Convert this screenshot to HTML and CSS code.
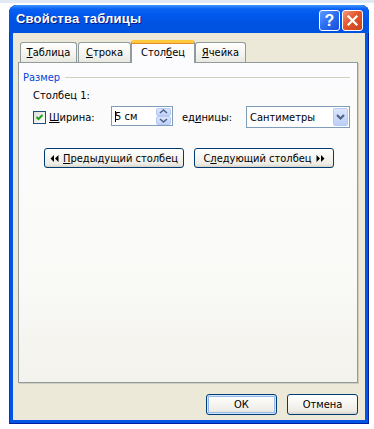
FILE: index.html
```html
<!DOCTYPE html>
<html lang="ru">
<head>
  <meta charset="UTF-8">
  <title>Свойства таблицы</title>
  <meta name="viewport" content="width=device-width, initial-scale=1">
  <link rel="stylesheet" href="styles.css">
</head>
<body>
  <div class="topstrip"></div>

  <div class="window">
    <div class="titlebar">
      <span class="title">Свойства таблицы</span>
      <div class="caption-btns">
        <div class="cap help">?</div>
        <div class="cap close">
          <svg width="13" height="13" viewBox="0 0 13 13">
            <path d="M2.5 2.5 L10.5 10.5 M10.5 2.5 L2.5 10.5" stroke="#fff" stroke-width="2.2" stroke-linecap="square"/>
          </svg>
        </div>
      </div>
    </div>

    <div class="client">
      <div class="tabs">
        <div class="tab t1"><u>Т</u>аблица</div>
        <div class="tab t2"><u>С</u>трока</div>
        <div class="tab t3 active">Стол<u>б</u>ец</div>
        <div class="tab t4"><u>Я</u>чейка</div>
      </div>

      <div class="panel">
        <div class="group-head">
          <span>Размер</span>
          <div class="group-line"></div>
        </div>

        <div class="col-label">Столбец 1:</div>

        <div class="size-row">
          <div class="check">
            <span class="box">
              <svg width="11" height="11" viewBox="0 0 11 11">
                <path d="M2.5 5 L4.5 7 L8.5 3" stroke="#21a121" stroke-width="2" fill="none"/>
              </svg>
            </span>
            <span><u>Ш</u>ирина:</span>
          </div>

          <div class="spin">
            <span class="spin-val">5 см</span>
            <span class="caret"></span>
            <div class="spin-btns">
              <span class="sb">
                <svg width="9" height="5" viewBox="0 0 9 5"><path d="M1 4 L4.5 1 L8 4" stroke="#4d6185" stroke-width="1.5" fill="none"/></svg>
              </span>
              <span class="sb">
                <svg width="9" height="5" viewBox="0 0 9 5"><path d="M1 1 L4.5 4 L8 1" stroke="#4d6185" stroke-width="1.5" fill="none"/></svg>
              </span>
            </div>
          </div>

          <span class="units">ед<u>и</u>ницы:</span>

          <div class="select">
            <span class="select-val">Сантиметры</span>
            <span class="drop">
              <svg width="9" height="6" viewBox="0 0 9 6"><path d="M1 1 L4.5 4.5 L8 1" stroke="#4d6185" stroke-width="2" fill="none"/></svg>
            </span>
          </div>
        </div>

        <div class="nav-row">
          <div class="btn nav">
            <svg width="9" height="7" viewBox="0 0 9 7"><path d="M4 0 L0.5 3.5 L4 7 Z M8.5 0 L5 3.5 L8.5 7 Z" fill="#000"/></svg>
            <span><u>П</u>редыдущий столбец</span>
          </div>
          <div class="btn nav">
            <span>С<u>л</u>едующий столбец</span>
            <svg width="9" height="7" viewBox="0 0 9 7"><path d="M0.5 0 L4 3.5 L0.5 7 Z M5 0 L8.5 3.5 L5 7 Z" fill="#000"/></svg>
          </div>
        </div>
      </div>

      <div class="footer">
        <div class="btn dlg default">ОК</div>
        <div class="btn dlg">Отмена</div>
      </div>
    </div>
  </div>
</body>
</html>
```

FILE: styles.css
```css
body {
  margin: 0;
  background-color: #fff;
  font-family: "DejaVu Sans Condensed", "DejaVu Sans", sans-serif;
  font-size: 11px;
  color: #000;
}

.topstrip {
  height: 3px;
  background-color: #e1e9f5;
}

.window {
  margin: 2px 0 0 9px;
  width: 360px;
  height: 419px;
  box-sizing: border-box;
  display: flex;
  flex-direction: column;
  padding: 0 4px 4px;
  background-color: #0055e5;
  border-radius: 8px 8px 0 0;
  box-shadow: inset 1px 0 #0831d9, inset -1px 0 #001ea0, inset 0 -1px #001ea0;
}

.titlebar {
  height: 28px;
  margin: 0 -4px;
  padding: 0 6px 0 7px;
  display: flex;
  align-items: flex-start;
  justify-content: space-between;
  border-radius: 8px 8px 0 0;
  background: linear-gradient(#3d95ff 0, #0a61f2 4px, #0058ee 10px, #0054e3 60%, #0151df 100%);
}

.title {
  margin-top: 6px;
  font-family: "Liberation Sans", Arial, sans-serif;
  font-weight: bold;
  font-size: 13px;
  color: #fff;
  text-shadow: 1px 1px #0a1883;
  letter-spacing: 0.2px;
}

.caption-btns {
  display: flex;
  gap: 2px;
  margin-top: 5px;
}

.cap {
  width: 21px;
  height: 21px;
  box-sizing: border-box;
  border: 1px solid #fff;
  border-radius: 3px;
  display: flex;
  align-items: center;
  justify-content: center;
}

.help {
  background: linear-gradient(135deg, #5c9cff 0%, #2a6cf0 50%, #1b4fd8 100%);
  color: #fff;
  font-family: "Liberation Sans", Arial, sans-serif;
  font-weight: bold;
  font-size: 16px;
}

.close {
  background: linear-gradient(135deg, #f09a7c 0%, #e2562a 45%, #c8441d 100%);
}

.client {
  flex: 1;
  background-color: #ece9d8;
  padding-top: 7px;
  display: flex;
  flex-direction: column;
}

.tabs {
  display: flex;
  align-items: flex-end;
  margin-left: 7px;
  height: 22px;
}

.tab {
  height: 20px;
  box-sizing: border-box;
  border: 1px solid #919b9c;
  border-bottom: none;
  border-radius: 3px 3px 0 0;
  background: linear-gradient(#fff, #f3f3ef 60%, #e9e8e1);
  display: flex;
  align-items: center;
  justify-content: center;
  padding-bottom: 1px;
}

.t1 { width: 57px; }
.t2 { width: 53px; margin-left: 1px; }
.t3 { width: 64px; }
.t4 { width: 51px; }

.tab.active {
  height: 23px;
  position: relative;
  z-index: 1;
  margin-bottom: -1px;
  background: #fcfcfe;
  border-top: 3px solid #ffc73c;
  box-shadow: inset 0 1px #e68b2c;
  border-radius: 3px 3px 0 0;
  padding-bottom: 1px;
}

.panel {
  margin-left: 5px;
  width: 340px;
  height: 321px;
  box-sizing: border-box;
  border: 1px solid #919b9c;
  background: linear-gradient(#fcfcfe, #f9f9f6 70%, #f3f2ec);
  box-shadow: 1px 1px #d0cdbd;
  padding: 8px 0 0;
}

.group-head {
  display: flex;
  align-items: center;
  padding-left: 4px;
  padding-right: 7px;
  color: #0046d5;
  height: 13px;
}

.group-line {
  flex: 1;
  height: 1px;
  margin-left: 5px;
  background-color: #d0d0bf;
}

.col-label {
  margin: 5px 0 0 14px;
  height: 13px;
  line-height: 13px;
}

.size-row {
  display: flex;
  align-items: center;
  margin: 4px 0 0 14px;
  height: 22px;
}

.check {
  display: flex;
  align-items: center;
  gap: 3px;
  width: 78px;
}

.box {
  width: 13px;
  height: 13px;
  box-sizing: border-box;
  border: 1px solid #1c5180;
  background: linear-gradient(135deg, #dcdcd7, #fff);
  display: flex;
  align-items: center;
  justify-content: center;
}

.spin {
  position: relative;
  width: 62px;
  height: 20px;
  box-sizing: border-box;
  border: 1px solid #7f9db9;
  background-color: #fff;
  display: flex;
  align-items: center;
  margin-top: -2px;
}

.spin-val {
  flex: 1;
  padding-left: 3px;
}

.caret {
  position: absolute;
  left: 3px;
  top: 4px;
  width: 1px;
  height: 11px;
  background-color: #000;
}

.spin-btns {
  display: flex;
  flex-direction: column;
  width: 15px;
  height: 17px;
  margin-right: 1px;
}

.sb {
  flex: 1;
  display: flex;
  align-items: center;
  justify-content: center;
  background: linear-gradient(#dce6fd, #c0d2fb);
  border: 1px solid #b8cbf6;
  border-radius: 2px;
}

.units {
  margin-left: 9px;
  width: 64px;
}

.select {
  width: 104px;
  height: 22px;
  box-sizing: border-box;
  border: 1px solid #7f9db9;
  background-color: #fff;
  display: flex;
  align-items: center;
  padding: 0 1px 0 3px;
}

.select-val {
  flex: 1;
}

.drop {
  width: 15px;
  height: 18px;
  box-sizing: border-box;
  border: 1px solid #b8cbf6;
  border-radius: 2px;
  background: linear-gradient(#dce6fd, #bccff9);
  display: flex;
  align-items: center;
  justify-content: center;
}

.nav-row {
  display: flex;
  gap: 10px;
  margin: 20px 0 0 25px;
}

.btn {
  box-sizing: border-box;
  border: 1px solid #003c74;
  border-radius: 3px;
  background: linear-gradient(#fff, #f5f4ef 50%, #ecebe4 85%, #d8d2c6);
  display: flex;
  align-items: center;
  justify-content: center;
  gap: 4px;
}

.nav {
  width: 140px;
  height: 20px;
}

.footer {
  display: flex;
  justify-content: flex-end;
  gap: 10px;
  margin-top: 11px;
  padding-right: 7px;
}

.dlg {
  width: 71px;
  height: 21px;
}

.default {
  box-shadow: inset 0 0 0 1px #cee7ff, inset 0 0 0 2px #98b8ea;
}
```
